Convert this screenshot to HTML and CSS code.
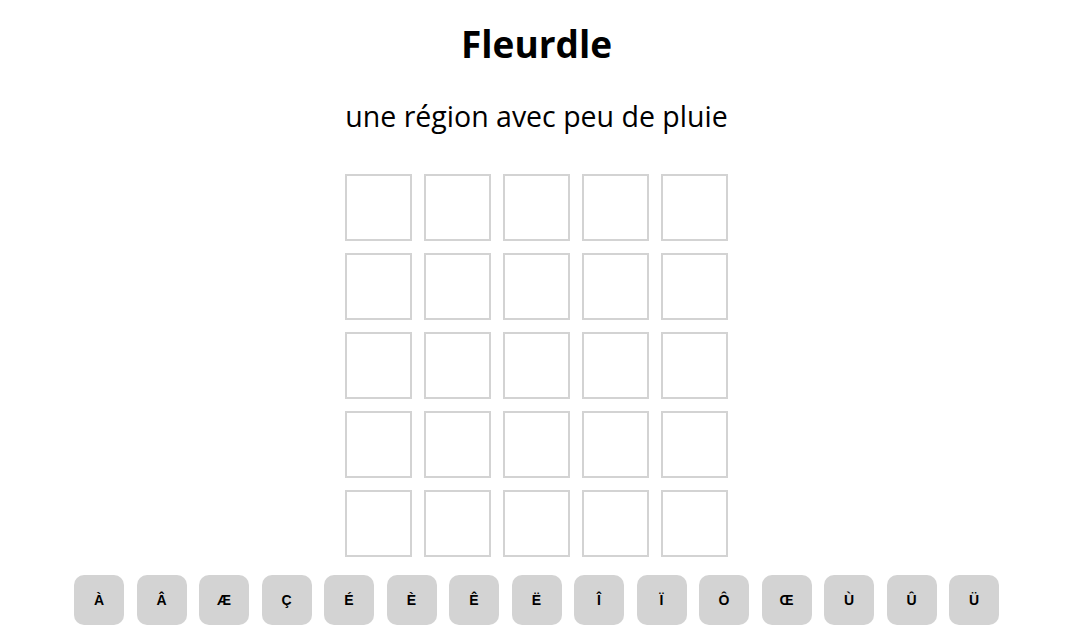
FILE: index.html
```html
<!DOCTYPE html>
<html lang="fr">
<head>
<meta charset="utf-8">
<title>Fleurdle</title>
<link rel="stylesheet" href="styles.css">
</head>
<body>
<main class="app">
  <h1 class="title">Fleurdle</h1>
  <p class="clue">une région avec peu de pluie</p>
  <div class="board">
    <div class="row"><div class="tile"></div><div class="tile"></div><div class="tile"></div><div class="tile"></div><div class="tile"></div></div>
    <div class="row"><div class="tile"></div><div class="tile"></div><div class="tile"></div><div class="tile"></div><div class="tile"></div></div>
    <div class="row"><div class="tile"></div><div class="tile"></div><div class="tile"></div><div class="tile"></div><div class="tile"></div></div>
    <div class="row"><div class="tile"></div><div class="tile"></div><div class="tile"></div><div class="tile"></div><div class="tile"></div></div>
    <div class="row"><div class="tile"></div><div class="tile"></div><div class="tile"></div><div class="tile"></div><div class="tile"></div></div>
  </div>
  <div class="keys">
    <button class="key">À</button>
    <button class="key">Â</button>
    <button class="key">Æ</button>
    <button class="key">Ç</button>
    <button class="key">É</button>
    <button class="key">È</button>
    <button class="key">Ê</button>
    <button class="key">Ë</button>
    <button class="key">Î</button>
    <button class="key">Ï</button>
    <button class="key">Ô</button>
    <button class="key">Œ</button>
    <button class="key">Ù</button>
    <button class="key">Û</button>
    <button class="key">Ü</button>
  </div>
</main>
</body>
</html>
```

FILE: styles.css
```css
html, body {
  margin: 0;
  padding: 0;
  background: #ffffff;
}

body {
  font-family: "Open Sans", "Noto Sans", sans-serif;
  color: #000;
}

.app {
  display: flex;
  flex-direction: column;
  align-items: center;
  padding-left: 5px;
  height: 629px;
  overflow: hidden;
}

.title {
  margin: 0;
  padding-top: 22px;
  font-size: 37px;
  font-weight: 700;
  line-height: 44px;
  height: 44px;
}

.clue {
  margin: 0;
  padding-top: 31px;
  font-size: 28.5px;
  font-weight: 400;
  line-height: 38px;
  height: 38px;
}

.board {
  margin-top: 39px;
  display: flex;
  flex-direction: column;
  gap: 12px;
}

.row {
  display: flex;
  gap: 12px;
}

.tile {
  box-sizing: border-box;
  width: 67px;
  height: 67px;
  border: 2px solid #d3d3d3;
}

.keys {
  margin-top: 18px;
  display: flex;
  gap: 12.5px;
}

.key {
  box-sizing: border-box;
  width: 50px;
  height: 50px;
  border: none;
  border-radius: 10px;
  background: #d3d3d3;
  color: #000;
  font-family: "Liberation Sans", Arial, sans-serif;
  font-weight: 700;
  font-size: 14px;
  padding: 0;
}
```
